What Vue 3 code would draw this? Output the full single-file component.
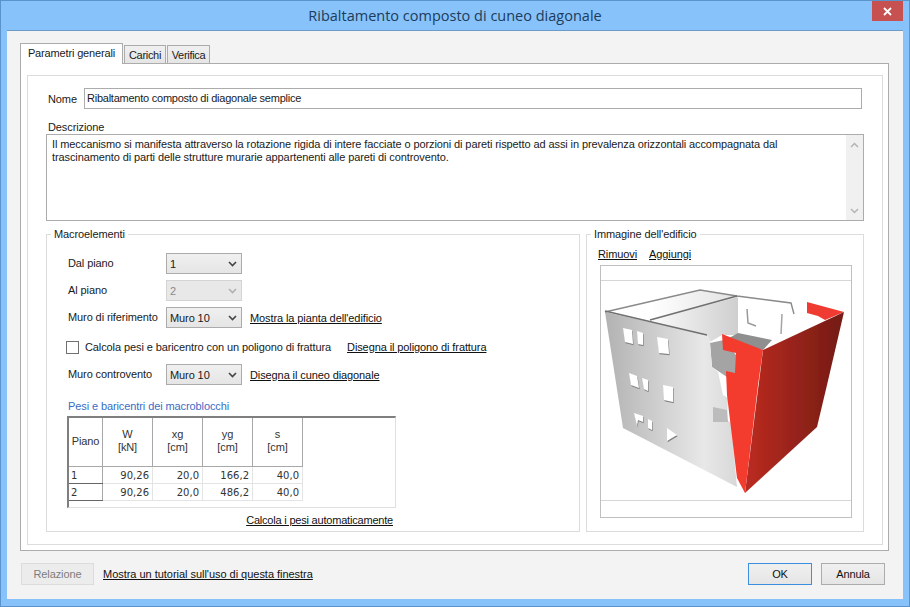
<script setup>
const columns = [
  { top: 'Piano', bottom: '' },
  { top: 'W', bottom: '[kN]' },
  { top: 'xg', bottom: '[cm]' },
  { top: 'yg', bottom: '[cm]' },
  { top: 's', bottom: '[cm]' }
]

const rows = [
  { piano: '1', w: '90,26', xg: '20,0', yg: '166,2', s: '40,0' },
  { piano: '2', w: '90,26', xg: '20,0', yg: '486,2', s: '40,0' }
]

const windows = [
  '623,328 632,330 633,344 625,342',
  '637,331 643,333 643,345 638,344',
  '657,337 668,339 669,354 659,353',
  '629,373 637,376 639,388 631,385',
  '642,378 648,380 648,391 644,389',
  '663,385 673,387 673,402 664,400',
  '634,413 643,416 643,422 638,420 637,426',
  '648,419 652,421 652,430 648,428',
  '667,428 677,435 667,441'
]
</script>

<template>
  <div class="window">
    <div class="titlebar">
      <span>Ribaltamento composto di cuneo diagonale</span>
      <div class="close">
        <svg width="9" height="9" viewBox="0 0 9 9">
          <path d="M1 1 L8 8 M8 1 L1 8" stroke="#fff" stroke-width="1.8" fill="none" />
        </svg>
      </div>
    </div>

    <div class="content">
      <div class="tabs">
        <div class="tab active">Parametri generali</div>
        <div class="tab carichi">Carichi</div>
        <div class="tab verifica">Verifica</div>
      </div>

      <div class="pane">
        <div class="panel">
          <div class="name-row">
            <label>Nome</label>
            <div class="field">Ribaltamento composto di diagonale semplice</div>
          </div>

          <div class="desc-label">Descrizione</div>
          <div class="desc">
            <div class="desc-text">
              Il meccanismo si manifesta attraverso la rotazione rigida di intere facciate o porzioni di pareti rispetto ad assi in prevalenza orizzontali accompagnata dal<br>
              trascinamento di parti delle strutture murarie appartenenti alle pareti di controvento.
            </div>
            <div class="scrollbar">
              <svg width="9" height="6" viewBox="0 0 9 6"><path d="M1 5 L4.5 1.5 L8 5" stroke="#b4b4b4" stroke-width="1.5" fill="none" /></svg>
              <svg width="9" height="6" viewBox="0 0 9 6"><path d="M1 1 L4.5 4.5 L8 1" stroke="#b4b4b4" stroke-width="1.5" fill="none" /></svg>
            </div>
          </div>

          <div class="groups">
            <div class="group macro">
              <div class="legend">Macroelementi</div>

              <div class="row">
                <span class="row-label">Dal piano</span>
                <div class="select">
                  <span>1</span>
                  <svg width="9" height="6" viewBox="0 0 9 6"><path d="M1 1 L4.5 4.5 L8 1" stroke="#444" stroke-width="1.6" fill="none" /></svg>
                </div>
              </div>
              <div class="row">
                <span class="row-label">Al piano</span>
                <div class="select disabled">
                  <span>2</span>
                  <svg width="9" height="6" viewBox="0 0 9 6"><path d="M1 1 L4.5 4.5 L8 1" stroke="#b0b0b0" stroke-width="1.6" fill="none" /></svg>
                </div>
              </div>
              <div class="row">
                <span class="row-label">Muro di riferimento</span>
                <div class="select">
                  <span>Muro 10</span>
                  <svg width="9" height="6" viewBox="0 0 9 6"><path d="M1 1 L4.5 4.5 L8 1" stroke="#444" stroke-width="1.6" fill="none" /></svg>
                </div>
                <a class="link">Mostra la pianta dell'edificio</a>
              </div>
              <div class="check-row">
                <span class="checkbox"></span>
                <span class="check-text">Calcola pesi e baricentro con un poligono di frattura</span>
                <a class="link">Disegna il poligono di frattura</a>
              </div>
              <div class="row">
                <span class="row-label">Muro controvento</span>
                <div class="select">
                  <span>Muro 10</span>
                  <svg width="9" height="6" viewBox="0 0 9 6"><path d="M1 1 L4.5 4.5 L8 1" stroke="#444" stroke-width="1.6" fill="none" /></svg>
                </div>
                <a class="link">Disegna il cuneo diagonale</a>
              </div>

              <div class="table-title">Pesi e baricentri dei macroblocchi</div>
              <div class="table-box">
                <table>
                  <thead>
                    <tr>
                      <th v-for="c in columns" :key="c.top">{{ c.top }}<br v-if="c.bottom">{{ c.bottom }}</th>
                    </tr>
                  </thead>
                  <tbody>
                    <tr v-for="r in rows" :key="r.piano">
                      <td class="piano">{{ r.piano }}</td>
                      <td>{{ r.w }}</td>
                      <td>{{ r.xg }}</td>
                      <td>{{ r.yg }}</td>
                      <td>{{ r.s }}</td>
                    </tr>
                  </tbody>
                </table>
              </div>
              <div class="auto-row"><a class="link">Calcola i pesi automaticamente</a></div>
            </div>

            <div class="group picture">
              <div class="legend">Immagine dell'edificio</div>
              <div class="picture-links">
                <a class="link">Rimuovi</a>
                <a class="link">Aggiungi</a>
              </div>
              <div class="image-box">
                <svg width="251" height="252" viewBox="600 265 251 252">
                  <defs>
                    <linearGradient id="wall" x1="605" y1="0" x2="737" y2="0" gradientUnits="userSpaceOnUse">
                      <stop offset="0" stop-color="#b2b2b2" />
                      <stop offset="0.75" stop-color="#e8e8e8" />
                      <stop offset="1" stop-color="#d8d8d8" />
                    </linearGradient>
                    <linearGradient id="inner" x1="650" y1="0" x2="738" y2="0" gradientUnits="userSpaceOnUse">
                      <stop offset="0" stop-color="#fbfbfb" />
                      <stop offset="1" stop-color="#cfcfcf" />
                    </linearGradient>
                    <linearGradient id="back" x1="650" y1="0" x2="738" y2="0" gradientUnits="userSpaceOnUse">
                      <stop offset="0" stop-color="#ffffff" />
                      <stop offset="1" stop-color="#e2e2e2" />
                    </linearGradient>
                    <linearGradient id="dark" x1="750" y1="0" x2="840" y2="0" gradientUnits="userSpaceOnUse">
                      <stop offset="0" stop-color="#b82a20" />
                      <stop offset="1" stop-color="#761c15" />
                    </linearGradient>
                    <filter id="soft"><feGaussianBlur stdDeviation="0.4" /></filter>
                  </defs>

                  <line x1="600" y1="280.5" x2="851" y2="280.5" stroke="#d6d6d6" />
                  <line x1="600" y1="500.5" x2="851" y2="500.5" stroke="#d6d6d6" />

                  <g filter="url(#soft)">
                    <polygon points="605,312 700,290 737,296 650,320" fill="url(#back)" />
                    <polygon points="650,320 738,297 738,335 722,335 710,342 707,335" fill="url(#inner)" />
                    <polygon points="738,333 772,340 763,350 722,342" fill="#8f8f8f" />
                    <polygon points="710,343 724,340 736,355 736,375 727,377 712,367" fill="#a4a4a4" />
                    <polygon points="605,312 707,335 710,343 712,367 718,372 723,395 728,398 727,420 731,423 737,487 623,428" fill="url(#wall)" />
                    <polygon points="713,407 727,410 728,422 713,422" fill="#bcbcbc" />
                    <polyline points="605,312 700,290 737,296 791,303 794,314" stroke="#8a8a8a" stroke-width="1.4" fill="none" />
                    <polyline points="605,311 707,335" stroke="#6f6f6f" stroke-width="1.6" fill="none" />
                    <polyline points="650,320 737,296" stroke="#6f6f6f" stroke-width="1.6" fill="none" />
                    <polyline points="747,309 748,323 756,326" stroke="#9a9a9a" stroke-width="1.5" fill="none" />
                    <polyline points="782,314 781,334" stroke="#a4a4a4" stroke-width="1.5" fill="none" />

                    <polygon v-for="w in windows" :key="'s' + w" :points="w" fill="#808080" transform="translate(0.6 1.3)" />
                    <polygon v-for="w in windows" :key="w" :points="w" fill="#fff" />

                    <polygon points="807,302 844,312 825,320 818,316 807,313" fill="#f03a30" />
                    <polygon points="763,350 844,312 827,385 817,427 745,493" fill="url(#dark)" />
                    <polygon points="722,334 763,350 758,385 745,493 737,478 727,395 726,371 735,373 736,353 723,350" fill="#f33a2f" />
                  </g>
                </svg>
              </div>
            </div>
          </div>
        </div>
      </div>

      <div class="footer">
        <button class="btn relazione">Relazione</button>
        <a class="link tutorial">Mostra un tutorial sull'uso di questa finestra</a>
        <button class="btn ok">OK</button>
        <button class="btn annula">Annula</button>
      </div>
    </div>
  </div>
</template>

<style>
html, body {
  margin: 0;
  overflow: hidden;
}
</style>

<style scoped>
.window {
  box-sizing: border-box;
  width: 910px;
  height: 607px;
  display: flex;
  flex-direction: column;
  background: #87c2fa;
  border: 1px solid #5b93cc;
  font-family: "Liberation Sans", Arial, sans-serif;
  font-size: 11px;
  letter-spacing: -0.1px;
  color: #1a1a1a;
}

.titlebar {
  position: relative;
  height: 29px;
  flex: none;
  display: flex;
  align-items: center;
  justify-content: center;
  font-family: "Open Sans", sans-serif;
  font-size: 14.5px;
  letter-spacing: 0;
  color: #1c3c5c;
  padding-bottom: 1px;
  box-sizing: border-box;
}

.close {
  position: absolute;
  top: 0;
  right: 6px;
  width: 31px;
  height: 20px;
  background: #c75050;
  display: flex;
  align-items: center;
  justify-content: center;
}

.content {
  flex: 1;
  margin: 0 6px 7px;
  padding: 12px 14px 0 13px;
  background: #f3f3f3;
  border-top: 1px solid #6b9cc9;
  display: flex;
  flex-direction: column;
}

.tabs {
  display: flex;
  height: 20px;
  align-items: flex-end;
  position: relative;
  z-index: 1;
}

.tab {
  box-sizing: border-box;
  height: 18px;
  border: 1px solid #acacac;
  border-bottom: none;
  background: linear-gradient(#f0f0f0, #e5e5e5);
  display: flex;
  align-items: center;
  justify-content: center;
  margin-right: 1px;
  letter-spacing: -0.3px;
}

.tab.active {
  height: 21px;
  margin-bottom: -1px;
  width: 103px;
  background: #fff;
  padding-bottom: 3px;
  letter-spacing: -0.15px;
}

.tab.carichi {
  width: 42px;
}

.tab.verifica {
  width: 43px;
}

.pane {
  box-sizing: border-box;
  height: 488px;
  background: #fff;
  border: 1px solid #acacac;
  padding: 11px 5px 5px 6px;
}

.panel {
  box-sizing: border-box;
  height: 470px;
  border: 1px solid #dcdcdc;
  padding: 12px 18px;
}

.name-row {
  display: flex;
  align-items: center;
  padding-left: 2px;
}

.name-row label {
  width: 36px;
}

.field {
  box-sizing: border-box;
  width: 778px;
  height: 21px;
  line-height: 19px;
  border: 1px solid #acacac;
  padding-left: 2px;
  letter-spacing: -0.24px;
}

.desc-label {
  height: 14px;
  line-height: 14px;
  margin: 11px 0 0 2px;
}

.desc {
  box-sizing: border-box;
  height: 87px;
  border: 1px solid #acacac;
  display: flex;
  justify-content: space-between;
}

.desc-text {
  padding: 3px 0 0 5px;
  line-height: 13px;
}

.scrollbar {
  width: 17px;
  background: #f0f0f0;
  display: flex;
  flex-direction: column;
  justify-content: space-between;
  align-items: center;
  padding: 7px 0 6px;
  box-sizing: border-box;
}

.groups {
  display: flex;
  justify-content: space-between;
  margin-top: 13px;
}

.group {
  position: relative;
  box-sizing: border-box;
  height: 298px;
  border: 1px solid #dcdcdc;
}

.legend {
  position: absolute;
  top: -7px;
  left: 4px;
  padding: 0 3px;
  background: #fff;
  line-height: 13px;
}

.macro {
  width: 534px;
  padding: 18px 0 0 19px;
}

.picture {
  width: 278px;
  padding-top: 13px;
}

.row {
  display: flex;
  align-items: center;
  height: 21px;
  margin-bottom: 6px;
  padding-left: 2px;
}

.row-label {
  width: 98px;
  flex: none;
  position: relative;
  top: -1px;
}

.select {
  box-sizing: border-box;
  width: 76px;
  height: 21px;
  border: 1px solid #acacac;
  background: linear-gradient(#f0f0f0, #e5e5e5);
  display: flex;
  align-items: center;
  justify-content: space-between;
  padding: 0 4px 0 3px;
  margin-right: 8px;
}

.select.disabled {
  background: #e8e8e8;
  border-color: #d4d4d4;
  color: #8a8a8a;
}

.link {
  color: #111;
  text-decoration: underline;
  cursor: pointer;
}

.check-row {
  display: flex;
  align-items: center;
  height: 14px;
  margin: 12px 0 10px;
}

.checkbox {
  box-sizing: border-box;
  width: 13px;
  height: 13px;
  border: 1px solid #707070;
  background: #fff;
  margin-right: 6px;
}

.check-text {
  margin-right: 16px;
}

.table-title {
  color: #3a6cc4;
  line-height: 14px;
  margin: 14px 0 3px 1px;
  padding-left: 1px;
}

.table-box {
  box-sizing: border-box;
  width: 329px;
  height: 92px;
  margin-left: 1px;
  border-top: 2px solid #7f7f7f;
  border-left: 2px solid #7f7f7f;
  border-right: 1px solid #e0e0e0;
  border-bottom: 1px solid #e0e0e0;
}

table {
  border-collapse: collapse;
  table-layout: fixed;
  width: 233px;
}

th {
  height: 46px;
  font-weight: normal;
  border-right: 1px solid #a8a8a8;
  border-bottom: 1px solid #a8a8a8;
  padding: 0 0 2px;
  width: 49px;
  line-height: 13px;
  color: #333;
}

th:first-child {
  width: 33px;
}

td {
  height: 15px;
  padding: 1px 3px 0 0;
  text-align: right;
  border-right: 1px solid #e4e4e4;
  border-bottom: 1px solid #e4e4e4;
  font-family: "DejaVu Sans", sans-serif;
  font-size: 10px;
  line-height: 12px;
  letter-spacing: 0;
  color: #333;
}

td.piano {
  text-align: left;
  padding-left: 2px;
  border-bottom-color: #666;
  border-right-color: #a8a8a8;
}

.auto-row {
  width: 326px;
  text-align: right;
  margin-top: 6px;
  padding-left: 1px;
  letter-spacing: -0.2px;
}

.picture-links {
  display: flex;
  gap: 12px;
  height: 17px;
  padding-left: 11px;
}

.image-box {
  box-sizing: border-box;
  width: 252px;
  height: 253px;
  margin-left: 13px;
  border: 1px solid #c0c0c0;
  overflow: hidden;
}

.image-box svg {
  display: block;
  margin: -1px;
}

.footer {
  display: flex;
  align-items: center;
  margin-top: 12px;
  padding: 0 4px 0 1px;
}

.btn {
  box-sizing: border-box;
  height: 22px;
  width: 64px;
  padding: 0;
  border: 1px solid #acacac;
  background: linear-gradient(#f0f0f0, #e5e5e5);
  font-family: inherit;
  font-size: 11px;
  letter-spacing: inherit;
  color: #111;
}

.btn.relazione {
  width: 73px;
  background: #ececec;
  border-color: #dcdcdc;
  color: #7d7d7d;
  margin-right: 9px;
}

.tutorial {
  margin-right: auto;
  letter-spacing: -0.03px;
}

.btn.ok {
  border-color: #3c8fdc;
  margin-right: 9px;
}
</style>
